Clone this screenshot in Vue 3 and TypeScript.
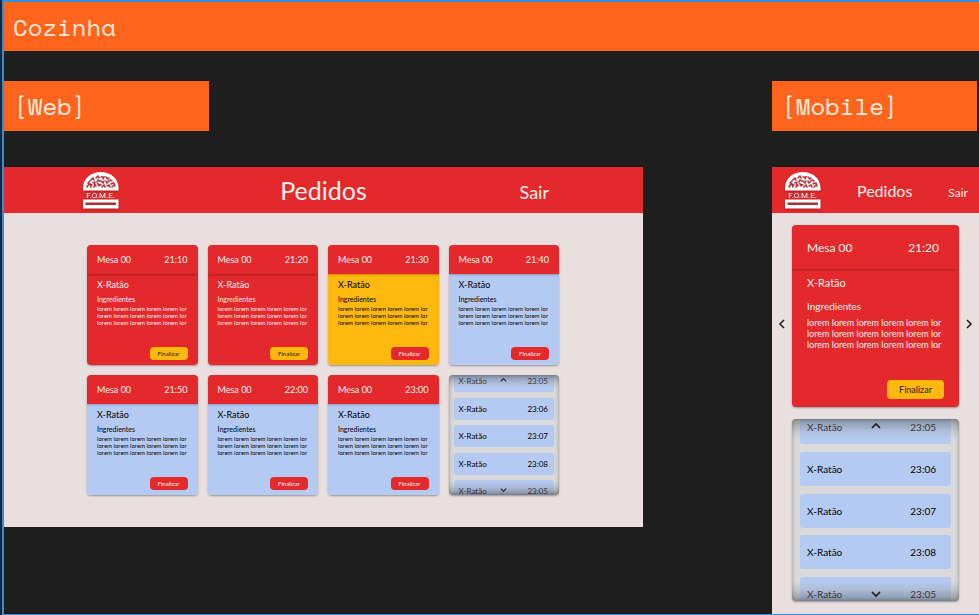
<script setup lang="ts">
type Tone = 'late' | 'warning' | 'fresh'

interface Order {
  time: string
  tone: Tone
}

const orders: Order[] = [
  { time: '21:10', tone: 'late' },
  { time: '21:20', tone: 'late' },
  { time: '21:30', tone: 'warning' },
  { time: '21:40', tone: 'fresh' },
  { time: '21:50', tone: 'fresh' },
  { time: '22:00', tone: 'fresh' },
  { time: '23:00', tone: 'fresh' },
]

const current: Order[] = [{ time: '21:20', tone: 'late' }]
const queue: string[] = ['23:05', '23:06', '23:07', '23:08', '23:05']
const line = 'lorem lorem lorem lorem lorem lor'

const frames = [
  { id: 'web', label: '[Web]', cards: orders },
  { id: 'mobile', label: '[Mobile]', cards: current },
]
</script>

<template>
  <main class="board">
    <h1 class="title">Cozinha</h1>
    <div class="columns">
      <section v-for="frame in frames" :key="frame.id" :class="frame.id">
        <h2 class="tag">{{ frame.label }}</h2>
        <div class="screen">
          <header class="topbar">
            <svg class="logo" viewBox="0 0 36 37" role="img" aria-label="F.O.M.E.">
              <path d="M0 18.500V16C0 6.500 8 0 17.800 0S35.500 6.500 35.500 16V18.500Z" fill="#fff" />
              <g fill="none" stroke="#b5303a" stroke-width="1.600" stroke-linecap="round">
                <path d="M4 15l2-3M5 11l2-2M8 15l-1-3 2 1M8 8l2-2 1 2M11 15l1-3 1 2M10 11l2-1M13 6l2-2 1 2M14 10l1-2 2 1M16 14l-1-2 3 1M18 5l3 0-1 2M18 9l2 2 1-2M19 15l2-2 1 2M23 5l2 2 1-1M23 9l1 2 2-2M24 14l2-1 1 2M27 8l2 1M28 12l2-1M29 15l2-2M31 11l1 3" />
              </g>
              <text x="17.500" y="26" text-anchor="middle" fill="#fff">F.O.M.E.</text>
              <path d="M0 27.500H35.500V36.500H0Z" fill="#fff" />
              <path d="M2.500 30.500H33V33H2.500Z" fill="#a8322f" />
            </svg>
            <h3 class="heading">Pedidos</h3>
            <a class="exit" href="#">Sair</a>
          </header>

          <div class="content">
            <button v-if="frame.id === 'mobile'" class="step" type="button" aria-label="Anterior">
              <svg viewBox="0 0 6 10"><path d="M5 1L1 5l4 4" /></svg>
            </button>
            <article v-for="order in frame.cards" :key="order.time" class="card" :class="order.tone">
              <div class="card-head">
                <span>Mesa 00</span>
                <time>{{ order.time }}</time>
              </div>
              <div class="card-body">
                <h4 class="dish">X-Ratão</h4>
                <h5 class="sub">Ingredientes</h5>
                <p class="lines"><span v-for="n in 3" :key="n">{{ line }}</span></p>
                <button class="finish" type="button">Finalizar</button>
              </div>
            </article>
            <button v-if="frame.id === 'mobile'" class="step" type="button" aria-label="Próximo">
              <svg viewBox="0 0 6 10"><path d="M1 1l4 4-4 4" /></svg>
            </button>
            <div class="queue">
              <ul class="items">
                <li v-for="(time, i) in queue" :key="i">
                  <span>X-Ratão</span>
                  <time>{{ time }}</time>
                </li>
              </ul>
              <button class="scroll up" type="button" aria-label="Subir">
                <svg viewBox="0 0 10 6"><path d="M1 5l4-4 4 4" /></svg>
              </button>
              <button class="scroll down" type="button" aria-label="Descer">
                <svg viewBox="0 0 10 6"><path d="M1 1l4 4 4-4" /></svg>
              </button>
            </div>
          </div>
        </div>
      </section>
    </div>
  </main>
</template>

<style>
body {
  background: #1a2634;
}
</style>

<style scoped>
* {
  box-sizing: border-box;
  margin: 0;
  padding: 0;
}

.board {
  min-height: 100vh;
  margin-left: 2px;
  border: solid #2f8fdc;
  border-width: 2px 0 1px 2px;
  background: #1e1e1e;
  font-family: Lato, sans-serif;
}

.title,
.tag {
  background: #ff641d;
  color: #fbeadb;
  font: 400 24px/50px 'Space Mono', 'Liberation Mono', monospace;
}

.title {
  height: 49px;
  padding-left: 9px;
}

.tag {
  width: 205px;
  max-width: 100%;
  margin-bottom: 36px;
  padding-left: 9px;
}

.columns {
  display: grid;
  grid-template-columns: 639fr 207fr;
  column-gap: 129px;
  padding-top: 30px;
  align-items: start;
}

.screen {
  background: #e9dfde;
}

.topbar {
  display: grid;
  grid-template-columns: 1fr auto 1fr;
  align-items: center;
  height: 46px;
  padding: 0 79px;
  background: #e3292b;
  color: #fff0ee;
}

.logo {
  width: 36px;
  height: 37px;
  filter: drop-shadow(0 1px 1px rgba(0, 0, 0, 0.25));
}

.logo text {
  font: 8px Roboto, 'Liberation Sans', sans-serif;
}

.heading {
  font-size: 25px;
  font-weight: 400;
  line-height: 30px;
}

.exit {
  justify-self: end;
  margin-right: 15px;
  padding-top: 4px;
  color: inherit;
  font-size: 18px;
  line-height: 22px;
  text-decoration: none;
}

.content {
  display: grid;
  grid-template-columns: repeat(4, 1fr);
  gap: 10px;
  padding: 32px 84px 32px 83px;
}

.card {
  display: flex;
  flex-direction: column;
  min-height: 120px;
  border-radius: 4px;
  box-shadow: 0 1px 2px rgba(0, 0, 0, 0.35);
  overflow: hidden;
}

.card-head {
  position: relative;
  display: flex;
  justify-content: space-between;
  padding: 9px 10px 8px;
  background: #e3292b;
  box-shadow: 0 1px 2px rgba(0, 0, 0, 0.25);
  color: #fff0ee;
  font-size: 9px;
  line-height: 12px;
}

.card-body {
  flex: 1;
  display: flex;
  flex-direction: column;
  padding: 5px 10px;
}

.late .card-body {
  background: #e3292b;
  color: #fff0ee;
}

.warning .card-body {
  background: #ffb80e;
}

.fresh .card-body {
  background: #b5caf2;
}

.dish {
  font-size: 9px;
  font-weight: 400;
  line-height: 12px;
}

.sub {
  margin-top: 4px;
  font-size: 7px;
  font-weight: 400;
  line-height: 9px;
}

.lines {
  margin-top: 1px;
  font-size: 6px;
  line-height: 7px;
  white-space: nowrap;
}

.lines span {
  display: block;
}

.finish {
  align-self: flex-end;
  width: 38px;
  height: 13px;
  margin-top: auto;
  border: 0;
  border-radius: 4px;
  background: #e3292b;
  color: #fff0ee;
  font: 6px/12px Lato, sans-serif;
}

.late .finish {
  background: #ffb80e;
  color: #241a10;
}

.queue {
  position: relative;
  height: 120px;
  border-radius: 4px;
  background: #d9d9d9;
  box-shadow: 0 1px 2px rgba(0, 0, 0, 0.35);
  overflow: hidden;
}

.queue::after {
  content: '';
  position: absolute;
  inset: 0;
  border-radius: 4px;
  box-shadow: inset 0 0 4px rgba(0, 0, 0, 0.3);
  pointer-events: none;
}

.items {
  display: flex;
  flex-direction: column;
  justify-content: space-between;
  height: 132px;
  margin-top: -5px;
  padding: 0 5px;
  list-style: none;
}

.items li {
  display: flex;
  justify-content: space-between;
  padding: 0 6px 0 5px;
  border-radius: 3px;
  background: #b5caf2;
  font-size: 8px;
  line-height: 22px;
}

.scroll {
  position: absolute;
  left: 0;
  display: flex;
  justify-content: center;
  width: 100%;
  height: 14px;
  padding: 3px 0;
  border: 0;
}

.up {
  top: 0;
  align-items: flex-start;
  background: linear-gradient(rgba(90, 90, 90, 0.5), rgba(160, 165, 175, 0.35) 60%, rgba(180, 185, 195, 0));
}

.down {
  bottom: 0;
  align-items: flex-end;
  background: linear-gradient(rgba(180, 185, 195, 0), rgba(160, 165, 175, 0.35) 40%, rgba(90, 90, 90, 0.5));
}

.scroll svg {
  width: 7px;
  height: 4px;
}

.step svg,
.scroll svg {
  fill: none;
  stroke: #1c1c1c;
  stroke-width: 1.6;
  overflow: visible;
}

/* Phone frame */
.mobile .topbar {
  display: flex;
  justify-content: space-between;
  padding: 0 11px 0 13px;
}

.mobile .heading {
  font-size: 16px;
  padding-top: 2px;
}

.mobile .exit {
  margin-right: 0;
  padding-top: 6px;
  font-size: 12px;
}

.mobile .content {
  grid-template-columns: 20px 1fr 20px;
  gap: 12px 0;
  padding: 12px 0 13px;
}

.mobile .card {
  min-height: 182px;
}

.mobile .card-head {
  padding: 15px 20px 13px 15px;
  font-size: 12px;
  line-height: 16px;
}

.mobile .card-body {
  padding: 7px 15px 8px;
}

.mobile .dish {
  font-size: 11px;
  line-height: 14px;
}

.mobile .sub {
  margin-top: 10px;
  font-size: 10px;
  line-height: 12px;
}

.mobile .lines {
  margin-top: 5px;
  font-size: 9px;
  line-height: 11px;
}

.mobile .finish {
  width: 57px;
  height: 19px;
  font-size: 9px;
  line-height: 18px;
}

.mobile .queue {
  grid-column: 2;
  height: 182px;
}

.mobile .items {
  height: 201px;
  margin-top: -9px;
  padding: 0 8px;
}

.mobile .items li {
  padding: 0 15px 0 7px;
  font-size: 10px;
  line-height: 34px;
}

.mobile .scroll {
  height: 20px;
  padding: 4px 0;
}

.mobile .scroll svg {
  width: 10px;
  height: 6px;
}

.step {
  display: flex;
  justify-content: center;
  align-items: center;
  padding-top: 16px;
  border: 0;
  background: none;
}

.step svg {
  width: 6px;
  height: 10px;
}
</style>
